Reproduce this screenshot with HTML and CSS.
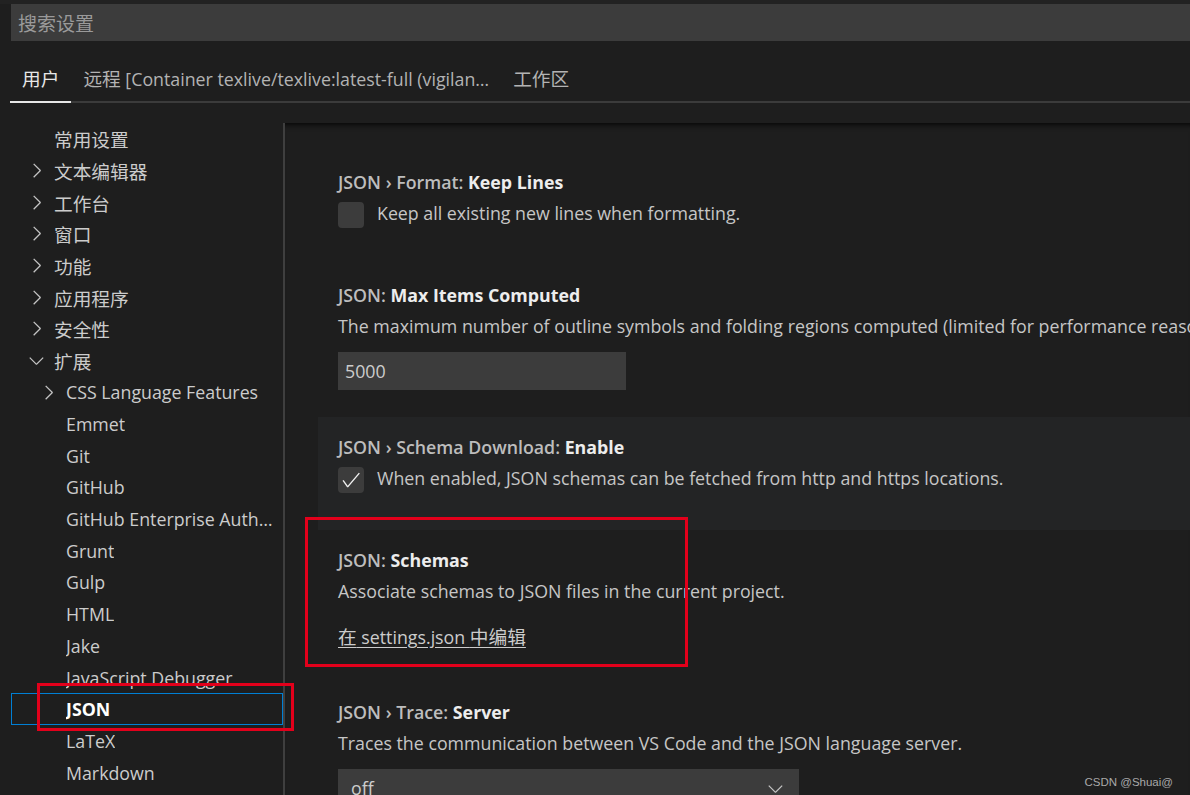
FILE: index.html
```html
<!DOCTYPE html>
<html lang="zh-CN">
<head>
<meta charset="utf-8">
<title>设置</title>
<link rel="stylesheet" href="styles.css">
</head>
<body>
<div class="editor">
  <div class="search-box"><span class="placeholder">搜索设置</span></div>

  <div class="tabs">
    <div class="tab active"><span class="zh">用户</span></div>
    <div class="tab"><span class="zh">远程</span> [Container texlive/texlive:latest-full (vigilan…</div>
    <div class="tab"><span class="zh">工作区</span></div>
  </div>

  <div class="main">
    <nav class="toc">
      <div class="row l1"><span class="twisty"></span><span class="zh">常用设置</span></div>
      <div class="row l1"><span class="twisty"><svg viewBox="0 0 16 16"><path d="M10.072 8.024L5.715 3.667l.618-.62L11 7.716v.618L6.333 13l-.618-.619 4.357-4.357z"/></svg></span><span class="zh">文本编辑器</span></div>
      <div class="row l1"><span class="twisty"><svg viewBox="0 0 16 16"><path d="M10.072 8.024L5.715 3.667l.618-.62L11 7.716v.618L6.333 13l-.618-.619 4.357-4.357z"/></svg></span><span class="zh">工作台</span></div>
      <div class="row l1"><span class="twisty"><svg viewBox="0 0 16 16"><path d="M10.072 8.024L5.715 3.667l.618-.62L11 7.716v.618L6.333 13l-.618-.619 4.357-4.357z"/></svg></span><span class="zh">窗口</span></div>
      <div class="row l1"><span class="twisty"><svg viewBox="0 0 16 16"><path d="M10.072 8.024L5.715 3.667l.618-.62L11 7.716v.618L6.333 13l-.618-.619 4.357-4.357z"/></svg></span><span class="zh">功能</span></div>
      <div class="row l1"><span class="twisty"><svg viewBox="0 0 16 16"><path d="M10.072 8.024L5.715 3.667l.618-.62L11 7.716v.618L6.333 13l-.618-.619 4.357-4.357z"/></svg></span><span class="zh">应用程序</span></div>
      <div class="row l1"><span class="twisty"><svg viewBox="0 0 16 16"><path d="M10.072 8.024L5.715 3.667l.618-.62L11 7.716v.618L6.333 13l-.618-.619 4.357-4.357z"/></svg></span><span class="zh">安全性</span></div>
      <div class="row l1"><span class="twisty"><svg viewBox="0 0 16 16"><path d="M7.976 10.072l4.357-4.357.62.618L8.284 11h-.618L3 6.333l.619-.618 4.357 4.357z"/></svg></span><span class="zh">扩展</span></div>
      <div class="row l2"><span class="twisty"><svg viewBox="0 0 16 16"><path d="M10.072 8.024L5.715 3.667l.618-.62L11 7.716v.618L6.333 13l-.618-.619 4.357-4.357z"/></svg></span><span class="label">CSS Language Features</span></div>
      <div class="row l2"><span class="twisty"></span><span class="label">Emmet</span></div>
      <div class="row l2"><span class="twisty"></span><span class="label">Git</span></div>
      <div class="row l2"><span class="twisty"></span><span class="label">GitHub</span></div>
      <div class="row l2"><span class="twisty"></span><span class="label">GitHub Enterprise Authentication Provider</span></div>
      <div class="row l2"><span class="twisty"></span><span class="label">Grunt</span></div>
      <div class="row l2"><span class="twisty"></span><span class="label">Gulp</span></div>
      <div class="row l2"><span class="twisty"></span><span class="label">HTML</span></div>
      <div class="row l2"><span class="twisty"></span><span class="label">Jake</span></div>
      <div class="row l2"><span class="twisty"></span><span class="label">JavaScript Debugger</span></div>
      <div class="row l2 selected"><span class="twisty"></span><span class="label">JSON</span></div>
      <div class="row l2"><span class="twisty"></span><span class="label">LaTeX</span></div>
      <div class="row l2"><span class="twisty"></span><span class="label">Markdown</span></div>
    </nav>

    <section class="settings">
      <div class="setting has-check">
        <div class="setting-title"><span class="cat">JSON › Format: </span><span class="key">Keep Lines</span></div>
        <div class="check-row"><span class="checkbox"></span><span class="desc">Keep all existing new lines when formatting.</span></div>
      </div>

      <div class="setting has-input">
        <div class="setting-title"><span class="cat">JSON: </span><span class="key">Max Items Computed</span></div>
        <div class="desc-line">The maximum number of outline symbols and folding regions computed (limited for performance reasons).</div>
        <div class="input">5000</div>
      </div>

      <div class="setting has-check focused">
        <div class="setting-title"><span class="cat">JSON › Schema Download: </span><span class="key">Enable</span></div>
        <div class="check-row"><span class="checkbox checked"><svg viewBox="0 0 16 16"><path d="M14.431 3.323l-8.47 10-.79-.036-3.35-4.77.818-.574 2.978 4.24 8.051-9.506.764.646z"/></svg></span><span class="desc">When enabled, JSON schemas can be fetched from http and https locations.</span></div>
      </div>

      <div class="setting has-link">
        <div class="setting-title"><span class="cat">JSON: </span><span class="key">Schemas</span></div>
        <div class="desc-line">Associate schemas to JSON files in the current project.</div>
        <div class="edit-link"><a href="#"><span class="zh">在</span> settings.json <span class="zh">中编辑</span></a></div>
      </div>

      <div class="setting">
        <div class="setting-title"><span class="cat">JSON › Trace: </span><span class="key">Server</span></div>
        <div class="desc-line">Traces the communication between VS Code and the JSON language server.</div>
        <div class="select"><span>off</span><svg viewBox="0 0 16 16"><path d="M7.976 10.072l4.357-4.357.62.618L8.284 11h-.618L3 6.333l.619-.618 4.357 4.357z"/></svg></div>
      </div>
    </section>
  </div>

  <div class="annot annot-json"></div>
  <div class="annot annot-schemas"></div>
  <div class="watermark">CSDN @Shuai@</div>
</div>
</body>
</html>
```

FILE: styles.css
```css
* { box-sizing: border-box; }

html, body {
  margin: 0;
  height: 100%;
  overflow: hidden;
  background: #1e1e1e;
}

body {
  font-family: "Open Sans", "Noto Sans CJK SC", sans-serif;
  font-size: 17.8px;
  color: #cccccc;
}

.zh {
  font-family: "Noto Sans CJK SC", sans-serif;
  font-size: 18.7px;
}

.editor {
  position: relative;
  height: 795px;
  display: flex;
  flex-direction: column;
  border-top: 4px solid #222222;
}

/* search */
.search-box {
  margin-left: 11px;
  height: 37px;
  background: #3c3c3c;
  padding-left: 7px;
  display: flex;
  align-items: center;
  flex: none;
}
.placeholder {
  font-family: "Noto Sans CJK SC", sans-serif;
  font-size: 19px;
  color: #9a9a9a;
  line-height: 37px;
}

/* tabs */
.tabs {
  margin: 16px 0 0 10px;
  display: flex;
  border-bottom: 2px solid #3b3b3b;
  flex: none;
}
.tab {
  height: 46px;
  line-height: 42px;
  padding: 0 12px;
  margin-bottom: -2px;
  border-bottom: 2px solid transparent;
  color: #b3b3b3;
  white-space: nowrap;
}
.tab.active {
  color: #e7e7e7;
  border-bottom-color: #e7e7e7;
}

/* main area */
.main {
  margin-top: 20px;
  flex: 1;
  display: flex;
  min-height: 0;
}

.toc {
  width: 285px;
  flex: none;
  padding-left: 11px;
  border-right: 2px solid #3f3f3f;
  overflow: hidden;
}
.row {
  height: 31.7px;
  display: flex;
  align-items: center;
  gap: 6px;
  color: #cccccc;
  white-space: nowrap;
  padding-right: 3px;
}
.row.l1 { padding-left: 14px; }
.row.l2 { padding-left: 26px; }
.twisty {
  width: 23px;
  height: 23px;
  flex: none;
  color: #c5c5c5;
}
.twisty svg {
  width: 23px;
  height: 23px;
  fill: currentColor;
  display: block;
}
.row .label {
  overflow: hidden;
  text-overflow: ellipsis;
  min-width: 0;
  font-size: 17.8px;
}
.row.selected {
  box-shadow: inset 0 0 0 1px #007fd4;
}
.row.selected .label {
  font-weight: 700;
  color: #ffffff;
}

/* settings list */
.settings {
  flex: 1;
  min-width: 0;
  overflow: hidden;
  padding: 29px 0 0 33px;
  box-shadow: inset 0 7px 6px -6px #000000;
}
.setting {
  padding: 17px 0 0 20px;
  white-space: nowrap;
}
.setting.has-check { padding-bottom: 39px; }
.setting.has-input { padding-bottom: 27px; }
.setting.has-link { padding-bottom: 33px; }
.setting.focused { background: #232425; }

.setting-title {
  height: 26px;
  line-height: 26px;
  font-weight: 600;
}
.cat { color: #bdbdbd; }
.key { color: #ededed; font-weight: 700; }

.desc-line {
  margin-top: 5px;
  height: 26px;
  line-height: 26px;
  color: #c6c6c6;
}

.check-row {
  margin-top: 5px;
  height: 26px;
  display: flex;
  align-items: flex-start;
  gap: 13px;
}
.checkbox {
  width: 26px;
  height: 26px;
  margin-top: 2px;
  border-radius: 4px;
  background: #3c3c3c;
  flex: none;
  display: flex;
  align-items: center;
  justify-content: center;
}
.checkbox svg {
  width: 22px;
  height: 22px;
  fill: #f0f0f0;
}
.desc {
  line-height: 26px;
  color: #c6c6c6;
}

.input {
  margin-top: 13px;
  width: 288px;
  height: 38px;
  line-height: 38px;
  background: #3c3c3c;
  padding-left: 7px;
  color: #cccccc;
}

.edit-link {
  margin-top: 19px;
  height: 26px;
  line-height: 26px;
}
.edit-link a {
  color: #cccccc;
  text-decoration: underline;
  text-underline-offset: 3px;
}

.select {
  margin-top: 13px;
  width: 461px;
  height: 38px;
  background: #3c3c3c;
  padding: 0 12px 0 13px;
  display: flex;
  align-items: center;
  justify-content: space-between;
  color: #cccccc;
}
.select svg {
  width: 23px;
  height: 23px;
  fill: #c5c5c5;
}

/* annotations drawn over the screenshot */
.annot {
  position: absolute;
  border: 3px solid #e3001b;
  pointer-events: none;
}
.annot-json {
  left: 37px;
  top: 679px;
  width: 257px;
  height: 48px;
}
.annot-schemas {
  left: 305px;
  top: 513px;
  width: 383px;
  height: 150px;
}

.watermark {
  position: absolute;
  right: 17px;
  bottom: 7px;
  font-family: "Liberation Sans", Arial, sans-serif;
  font-size: 11.5px;
  color: #a9a9a9;
}
```
